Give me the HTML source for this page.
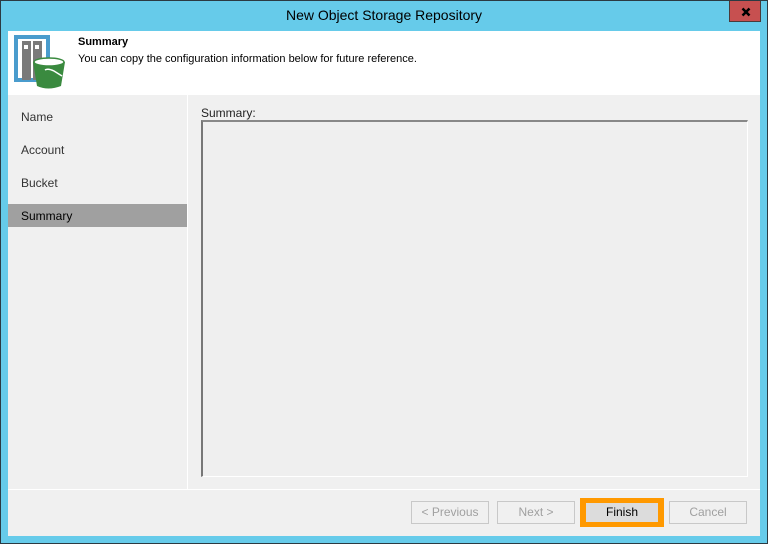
<!DOCTYPE html>
<html><head><style>
*{margin:0;padding:0;box-sizing:border-box}
body{width:768px;height:544px;background:#66cbea;position:relative;font-family:"Liberation Sans",sans-serif;font-size:12px;overflow:hidden}
.abs{position:absolute}
.frame{left:0;top:0;width:768px;height:544px;border:1px solid #2b3a42}
.title{left:0;top:7px;width:768px;text-align:center;font-size:14px;color:#000}
.close{left:729px;top:1px;width:32px;height:21px;background:#c75050;border:1px solid #4a3a3a;border-top:none}
.main{left:8px;top:31px;width:752px;height:505px;background:#f0f0f0}
.hdr{left:0;top:0;width:752px;height:64px;background:#fff}
.nav{left:13px;color:#333;font-size:12px}
.btn{top:470px;height:23px;border:1px solid #c8c8c8;background:#f0f0f0;color:#a0a0a0;text-align:center;line-height:21px;font-size:12px}
</style></head><body>
<div class="abs frame"></div>
<div class="abs title">New Object Storage Repository</div>
<div class="abs close"><svg width="32" height="20"><path d="M12.5 7.5 L19.5 14.5 M19.5 7.5 L12.5 14.5" stroke="#000" stroke-width="2.5"/></svg></div>
<div class="abs main">
 <div class="abs hdr">
  <svg class="abs" style="left:6px;top:4px" width="60" height="58">
   <rect x="2" y="2" width="32" height="43" fill="none" stroke="#4a9ccd" stroke-width="4"/>
   <rect x="8" y="6" width="9" height="39" fill="#7a7a7a"/>
   <rect x="19" y="6" width="9" height="39" fill="#7a7a7a"/>
   <rect x="10" y="10" width="4" height="4" fill="#fff"/>
   <rect x="21" y="10" width="4" height="4" fill="#fff"/>
   <path d="M19 27 L23 51 Q34 56 47 51 L51 27 Z" fill="#3a8a3f"/>
   <ellipse cx="35" cy="27" rx="15" ry="4" fill="#fff" stroke="#3a8a3f" stroke-width="1.5"/>
   <path d="M31 35 Q34 33 40 36 L48 41" stroke="#fff" stroke-width="1.5" fill="none"/>
  </svg>
  <div class="abs" style="left:70px;top:5px;font-weight:bold;font-size:11px">Summary</div>
  <div class="abs" style="left:70px;top:22px;font-size:11px">You can copy the configuration information below for future reference.</div>
 </div>
 <div class="abs" style="left:179px;top:64px;width:1px;height:394px;background:#fff"></div>
 <div class="abs" style="left:0;top:458px;width:752px;height:1px;background:#fff"></div>
 <div class="abs nav" style="top:79px">Name</div>
 <div class="abs nav" style="top:112px">Account</div>
 <div class="abs nav" style="top:145px">Bucket</div>
 <div class="abs" style="left:0;top:173px;width:179px;height:23px;background:#a0a0a0"></div>
 <div class="abs nav" style="top:178px;color:#000">Summary</div>
 <div class="abs" style="left:193px;top:75px;font-size:12px;color:#222">Summary:</div>
 <div class="abs" style="left:193px;top:89px;width:547px;height:357px;border-top:2px solid #888;border-left:2px solid #777;border-right:1px solid #fff;border-bottom:1px solid #fff;background:#efefef"></div>
 <div class="abs btn" style="left:403px;width:78px">&lt; Previous</div>
 <div class="abs btn" style="left:489px;width:78px">Next &gt;</div>
 <div class="abs" style="left:572px;top:467px;width:84px;height:29px;background:#ff9900"></div>
 <div class="abs" style="left:578px;top:472px;width:72px;height:19px;background:#dcdcdc;color:#000;text-align:center;line-height:19px">Finish</div>
 <div class="abs btn" style="left:661px;width:78px">Cancel</div>
</div>
</body></html>
